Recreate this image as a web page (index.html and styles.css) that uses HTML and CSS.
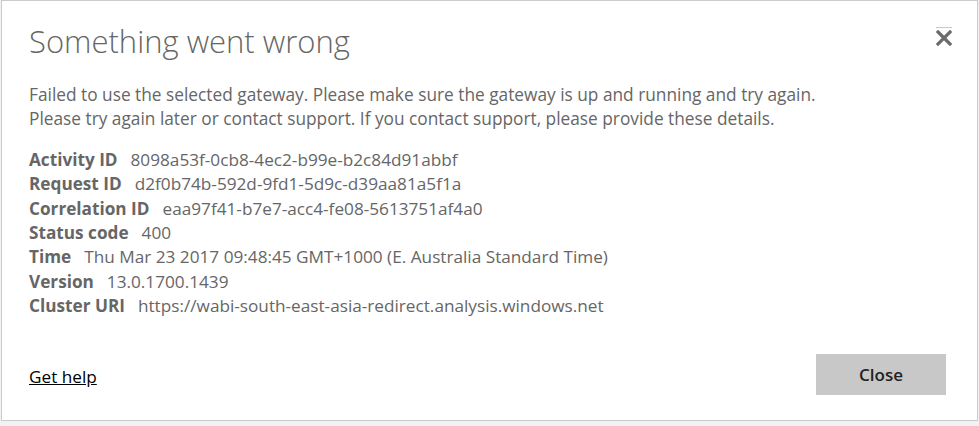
FILE: index.html
```html
<!DOCTYPE html>
<html lang="en">
<head>
<meta charset="utf-8">
<title>Something went wrong</title>
<link rel="stylesheet" href="styles.css">
</head>
<body>
<div class="dialog">
  <div class="header">
    <h1 class="title">Something went wrong</h1>
    <button class="close-x" aria-label="Close">
      <svg width="16" height="16" viewBox="0 0 16 16"><path d="M2 2 L14 14 M14 2 L2 14" stroke="#6b6b6b" stroke-width="3.2" stroke-linecap="square" fill="none"/></svg>
    </button>
  </div>
  <p class="message">Failed to use the selected gateway. Please make sure the gateway is up and running and try again.<br>Please try again later or contact support. If you contact support, please provide these details.</p>
  <dl class="details">
    <div class="row"><dt>Activity ID</dt><dd>8098a53f-0cb8-4ec2-b99e-b2c84d91abbf</dd></div>
    <div class="row"><dt>Request ID</dt><dd>d2f0b74b-592d-9fd1-5d9c-d39aa81a5f1a</dd></div>
    <div class="row"><dt>Correlation ID</dt><dd>eaa97f41-b7e7-acc4-fe08-5613751af4a0</dd></div>
    <div class="row"><dt>Status code</dt><dd>400</dd></div>
    <div class="row"><dt>Time</dt><dd>Thu Mar 23 2017 09:48:45 GMT+1000 (E. Australia Standard Time)</dd></div>
    <div class="row"><dt>Version</dt><dd>13.0.1700.1439</dd></div>
    <div class="row"><dt>Cluster URI</dt><dd>https://wabi-south-east-asia-redirect.analysis.windows.net</dd></div>
  </dl>
  <div class="footer">
    <a class="help" href="#">Get help</a>
    <button class="close-btn">Close</button>
  </div>
</div>
</body>
</html>
```

FILE: styles.css
```css
html, body {
  margin: 0;
  padding: 0;
  background: #f2f2f2;
}
body {
  font-family: "Open Sans", "Noto Sans", sans-serif;
  color: #666666;
}
.dialog {
  box-sizing: border-box;
  margin-left: 1px;
  width: 977px;
  height: 421px;
  background: #ffffff;
  border: 1px solid #cbcbcb;
  display: flex;
  flex-direction: column;
}
.header {
  display: flex;
  justify-content: space-between;
  align-items: flex-start;
  padding: 18px 25px 0 27px;
}
.title {
  margin: 0;
  font-size: 31px;
  font-weight: 300;
  line-height: 44px;
  color: #666666;
}
.close-x {
  margin-top: 8px;
  padding: 2px 0 0 0;
  width: 16px;
  background: none;
  border: none;
  border-top: 1px solid #b3cde3;
  line-height: 0;
  cursor: pointer;
}
.message {
  margin: 20px 0 0 0;
  padding: 0 31px 0 27px;
  font-size: 17.3px;
  line-height: 24px;
}
.details {
  margin: 17px 0 0 0;
  padding: 0 31px 0 27px;
  font-size: 17.2px;
  line-height: 24.33px;
}
.row {
  display: flex;
}
.row dt {
  font-weight: 700;
  margin-right: 13px;
}
.row dd {
  margin: 0;
}
.footer {
  margin-top: auto;
  padding: 0 31px 25px 27px;
  display: flex;
  justify-content: space-between;
  align-items: center;
}
.help {
  margin-top: 3px;
  color: #000000;
  font-size: 17.2px;
  text-decoration: underline;
}
.close-btn {
  width: 130px;
  height: 41px;
  background: #c8c8c8;
  border: none;
  font-family: inherit;
  font-size: 17px;
  font-weight: 600;
  color: #222222;
}
```
